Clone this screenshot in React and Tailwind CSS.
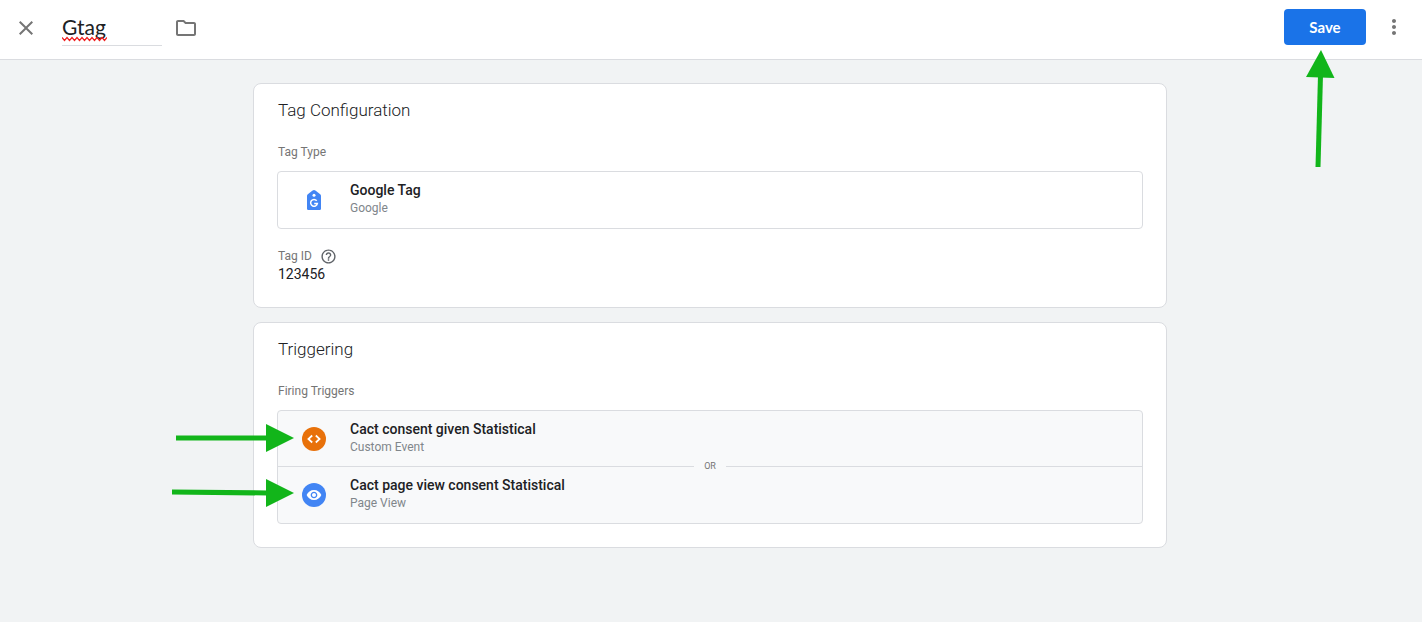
import React from "react";
import {
  MdClose,
  MdHelpOutline,
  MdMoreVert,
  MdOutlineFolder,
  MdVisibility,
} from "react-icons/md";

function GoogleTagIcon() {
  return (
    <svg className="size-6" viewBox="0 0 24 24" aria-hidden="true">
      <path
        d="M10.6 2.4Q12 1.5 13.4 2.4L18.2 6.2Q19 7 19 8V20.4Q19 22 17.8 22H6.2Q5 22 5 20.4V8Q5 7 5.8 6.2Z"
        fill="#4285f4"
      />
      <circle cx="12" cy="7.3" r="1.5" fill="#fff" />
      <path
        d="M14.7 12.7A3.4 3.4 0 1 0 15.4 15.4H12.2"
        fill="none"
        stroke="#fff"
        strokeWidth="1.5"
      />
    </svg>
  );
}

function CodeIcon() {
  return (
    <svg
      className="size-4"
      viewBox="0 0 16 16"
      fill="none"
      stroke="currentColor"
      strokeWidth="1.7"
      aria-hidden="true"
    >
      <path d="M6.2 4.5L2.4 8L6.2 11.5M9.8 4.5L13.6 8L9.8 11.5" />
    </svg>
  );
}

function Card({ title, children }) {
  return (
    <section className="rounded-lg border border-[#dadce0] bg-white px-[23px] pt-3.5 pb-[23px]">
      <h2 className="pl-px text-[17px] leading-6 font-light text-[#202124]">{title}</h2>
      {children}
    </section>
  );
}

function Label({ children }) {
  return <h3 className="mt-[22px] mb-[11px] pl-px text-xs leading-4 text-[#757575]">{children}</h3>;
}

function Row({ icon, name, kind }) {
  return (
    <div className="flex h-14 items-center gap-6 px-6">
      {icon}
      <div className="pb-0.5">
        <div className="text-sm leading-[18px] font-medium text-[#202124]">{name}</div>
        <div className="text-xs leading-[18px] text-[#80868b]">{kind}</div>
      </div>
    </div>
  );
}

function Arrow({ className, viewBox, line, head }) {
  return (
    <svg className={className} viewBox={viewBox} aria-hidden="true">
      <path d={line} stroke="#12b51a" strokeWidth="5" fill="none" />
      <path d={head} fill="#12b51a" />
    </svg>
  );
}

export default function App() {
  return (
    <div className="min-h-screen bg-[#f1f3f4] font-[Roboto,sans-serif]">
      <header className="flex h-[60px] items-start border-b border-[#dadce0] bg-white pr-4 pl-3.5">
        <button type="button" aria-label="Close" className="mt-4 text-[#757575]">
          <MdClose className="size-6" />
        </button>
        <div className="relative mt-2.5 ml-6">
          <input
            aria-label="Tag name"
            defaultValue="Gtag"
            spellCheck={false}
            className="block h-9 w-25 border-b border-[#dadce0] pb-0.5 font-[Lato,sans-serif] text-[21px] text-[#202124] outline-none"
          />
          <svg
            className="pointer-events-none absolute bottom-1 left-0 h-1.5 w-[45px]"
            viewBox="0 0 45 6"
            aria-hidden="true"
          >
            <path
              d="M0 1.5L2.5 4.5L5 1.5L7.5 4.5L10 1.5L12.5 4.5L15 1.5L17.5 4.5L20 1.5L22.5 4.5L25 1.5L27.5 4.5L30 1.5L32.5 4.5L35 1.5L37.5 4.5L40 1.5L42.5 4.5L45 1.5"
              fill="none"
              stroke="#f02020"
              strokeWidth="1.2"
            />
          </svg>
        </div>
        <button type="button" aria-label="Choose folder" className="mt-4 ml-3 text-[#757575]">
          <MdOutlineFolder className="size-6" />
        </button>
        <div className="relative mt-[9px] ml-auto">
          <button
            type="button"
            className="h-9 w-[82px] rounded bg-[#1a73e8] font-[Lato,sans-serif] text-[15px] font-bold text-white"
          >
            Save
          </button>
          <Arrow
            className="pointer-events-none absolute top-10 left-5 h-[120px] w-8"
            viewBox="0 0 32 120"
            line="M16.5 26L14 118"
            head="M17 1L30.5 29L2 28Z"
          />
        </div>
        <button type="button" aria-label="More actions" className="mt-[15px] ml-4 text-[#757575]">
          <MdMoreVert className="size-6" />
        </button>
      </header>

      <main className="flex justify-center pt-[23px] pr-0.5">
        <div className="flex w-full max-w-[914px] flex-col gap-3.5">
          <Card title="Tag Configuration">
            <Label>Tag Type</Label>
            <div className="rounded border border-[#dadce0]">
              <Row icon={<GoogleTagIcon />} name="Google Tag" kind="Google" />
            </div>
            <dl className="mt-[19px] pl-px">
              <dt className="flex h-4 items-center gap-2 text-xs text-[#757575]">
                Tag ID
                <MdHelpOutline className="size-[17px] text-[#5f6368]" />
              </dt>
              <dd className="text-sm leading-5 text-[#202124]">123456</dd>
            </dl>
          </Card>

          <Card title="Triggering">
            <Label>Firing Triggers</Label>
            <div className="relative rounded border border-[#dadce0] bg-[#f8f9fa]">
              <Row
                icon={
                  <span className="flex size-6 items-center justify-center rounded-full bg-[#e8710a] text-white">
                    <CodeIcon />
                  </span>
                }
                name="Cact consent given Statistical"
                kind="Custom Event"
              />
              <div className="-mt-px flex h-px items-center text-[9px] text-[#757575]">
                <span className="h-px flex-1 bg-[#dadce0]" />
                <span className="w-8 text-center">OR</span>
                <span className="h-px flex-1 bg-[#dadce0]" />
              </div>
              <Row
                icon={
                  <span className="flex size-6 items-center justify-center rounded-full bg-[#4285f4] text-white">
                    <MdVisibility className="size-4" />
                  </span>
                }
                name="Cact page view consent Statistical"
                kind="Page View"
              />
              <Arrow
                className="pointer-events-none absolute top-3 -left-[106px] h-8 w-[124px]"
                viewBox="0 0 124 32"
                line="M4 15H96"
                head="M94 1L122 15L94 29Z"
              />
              <Arrow
                className="pointer-events-none absolute top-[67px] -left-[106px] h-8 w-[124px]"
                viewBox="0 0 124 32"
                line="M0 14L96 15"
                head="M94 1L122 15L94 29Z"
              />
            </div>
          </Card>
        </div>
      </main>
    </div>
  );
}
